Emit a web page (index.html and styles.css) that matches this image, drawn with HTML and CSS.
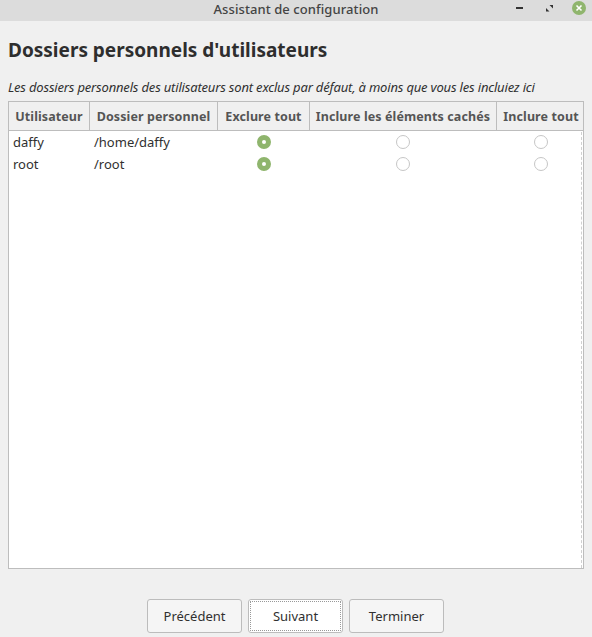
FILE: index.html
```html
<!DOCTYPE html>
<html lang="fr">
  <head>
    <meta charset="UTF-8" />
    <title>Assistant de configuration</title>
    <link rel="stylesheet" href="styles.css">
  </head>
  <body>
    <header class="titlebar">
      <span class="titlebar-title">Assistant de configuration</span>
      <div class="titlebar-buttons">
        <svg class="win-icon" width="10" height="10" viewBox="0 0 10 10">
          <rect x="0" y="4" width="7" height="2" fill="#333"/>
        </svg>
        <svg class="win-icon" width="10" height="10" viewBox="0 0 10 10">
          <path d="M4.5 2H8v3.5zM1 5l3.5 3.5H1z" fill="#333"/>
        </svg>
        <svg class="win-close" width="14" height="14" viewBox="0 0 14 14">
          <circle cx="7" cy="7" r="7" fill="#8fb56d"/>
          <path d="M4.5 4.5l5 5M9.5 4.5l-5 5" stroke="#fff" stroke-width="1.6"/>
        </svg>
      </div>
    </header>

    <main class="content">
      <h1>Dossiers personnels d'utilisateurs</h1>
      <p class="hint">Les dossiers personnels des utilisateurs sont exclus par défaut, à moins que vous les incluiez ici</p>

      <div class="table-box">
        <div class="row head">
          <div class="cell c-user">Utilisateur</div>
          <div class="cell c-home">Dossier personnel</div>
          <div class="cell c-none">Exclure tout</div>
          <div class="cell c-hidden">Inclure les éléments cachés</div>
          <div class="cell c-all">Inclure tout</div>
        </div>
        <div class="row">
          <div class="cell c-user">daffy</div>
          <div class="cell c-home">/home/daffy</div>
          <div class="cell c-none"><span class="radio on"></span></div>
          <div class="cell c-hidden"><span class="radio"></span></div>
          <div class="cell c-all"><span class="radio"></span></div>
        </div>
        <div class="row">
          <div class="cell c-user">root</div>
          <div class="cell c-home">/root</div>
          <div class="cell c-none"><span class="radio on"></span></div>
          <div class="cell c-hidden"><span class="radio"></span></div>
          <div class="cell c-all"><span class="radio"></span></div>
        </div>
        <div class="scroll-hint"></div>
      </div>
    </main>

    <footer class="actions">
      <button class="btn">Précédent</button>
      <button class="btn focus">Suivant</button>
      <button class="btn">Terminer</button>
    </footer>
  </body>
</html>
```

FILE: styles.css
```css
html,
body {
  height: 100%;
}

body {
  margin: 0;
  display: flex;
  flex-direction: column;
  font-family: "Noto Sans", "Open Sans", sans-serif;
  font-size: 13px;
  color: #303030;
  background-color: #f0f0f0;
  overflow: hidden;
}

.titlebar {
  flex: none;
  height: 21px;
  box-sizing: border-box;
  padding-bottom: 3px;
  display: flex;
  justify-content: center;
  align-items: center;
  position: relative;
  background-color: #dcdcdc;
}

.titlebar-title {
  font-size: 13px;
  font-weight: 500;
  letter-spacing: 0.08px;
  color: #444;
}

.titlebar-buttons {
  position: absolute;
  top: 1px;
  right: 6px;
  display: flex;
  align-items: center;
  gap: 19px;
  height: 14px;
}

.win-close {
  margin-left: -2px;
}

.content {
  flex: 1;
  min-height: 0;
  display: flex;
  flex-direction: column;
  padding: 0 8px;
}

h1 {
  margin: 15px 0 0;
  font-size: 19px;
  line-height: 28px;
  font-weight: 700;
  color: #2e2e2e;
}

.hint {
  margin: 15px 0 0;
  font-size: 13px;
  line-height: 17px;
  font-style: italic;
  letter-spacing: -0.18px;
}

.table-box {
  position: relative;
  margin-top: 5px;
  height: 468px;
  box-sizing: border-box;
  border: 1px solid #bdbdbd;
  background-color: white;
}

.row {
  display: flex;
  height: 22px;
  align-items: center;
}

.head {
  height: 28px;
  background-color: #f0f0f0;
  border-bottom: 1px solid #bdbdbd;
  font-size: 12.5px;
  font-weight: 700;
  color: #555;
  letter-spacing: 0.1px;
}

.head .cell {
  height: 100%;
  padding-left: 0;
  padding-right: 0;
  display: flex;
  align-items: center;
  justify-content: center;
  box-sizing: border-box;
  border-right: 1px solid #bdbdbd;
}

.head .cell:last-child {
  padding-left: 2px;
  border-right: none;
}

.cell {
  flex: none;
  box-sizing: border-box;
  white-space: nowrap;
}

.c-user {
  width: 81px;
  padding-left: 4px;
}

.c-home {
  width: 128px;
  padding-left: 4px;
}

.c-none {
  width: 92px;
  text-align: center;
}

.c-hidden {
  width: 187px;
  padding-right: 1px;
  text-align: center;
}

.c-all {
  width: 86px;
  padding-left: 2px;
  text-align: center;
}

.radio {
  display: block;
  width: 14px;
  height: 14px;
  margin: 0 auto;
  box-sizing: border-box;
  border: 1px solid #c6c6c6;
  border-radius: 50%;
  background-color: white;
}

.radio.on {
  border: 5px solid #8fb56d;
}

.scroll-hint {
  position: absolute;
  top: 30px;
  bottom: 0;
  right: 1px;
  border-right: 1px dashed #d0d0d0;
}

.actions {
  flex: none;
  height: 68px;
  display: flex;
  justify-content: center;
  gap: 6px;
  padding: 30px 1px 0 0;
  box-sizing: border-box;
}

.btn {
  width: 95px;
  height: 34px;
  padding: 0;
  font-family: inherit;
  font-size: 13px;
  color: #303030;
  background-color: #f5f5f5;
  border: 1px solid #bcbcbc;
  border-radius: 3px;
}

.focus {
  background-color: white;
  outline: 1px dotted #999;
  outline-offset: -3px;
}
```
